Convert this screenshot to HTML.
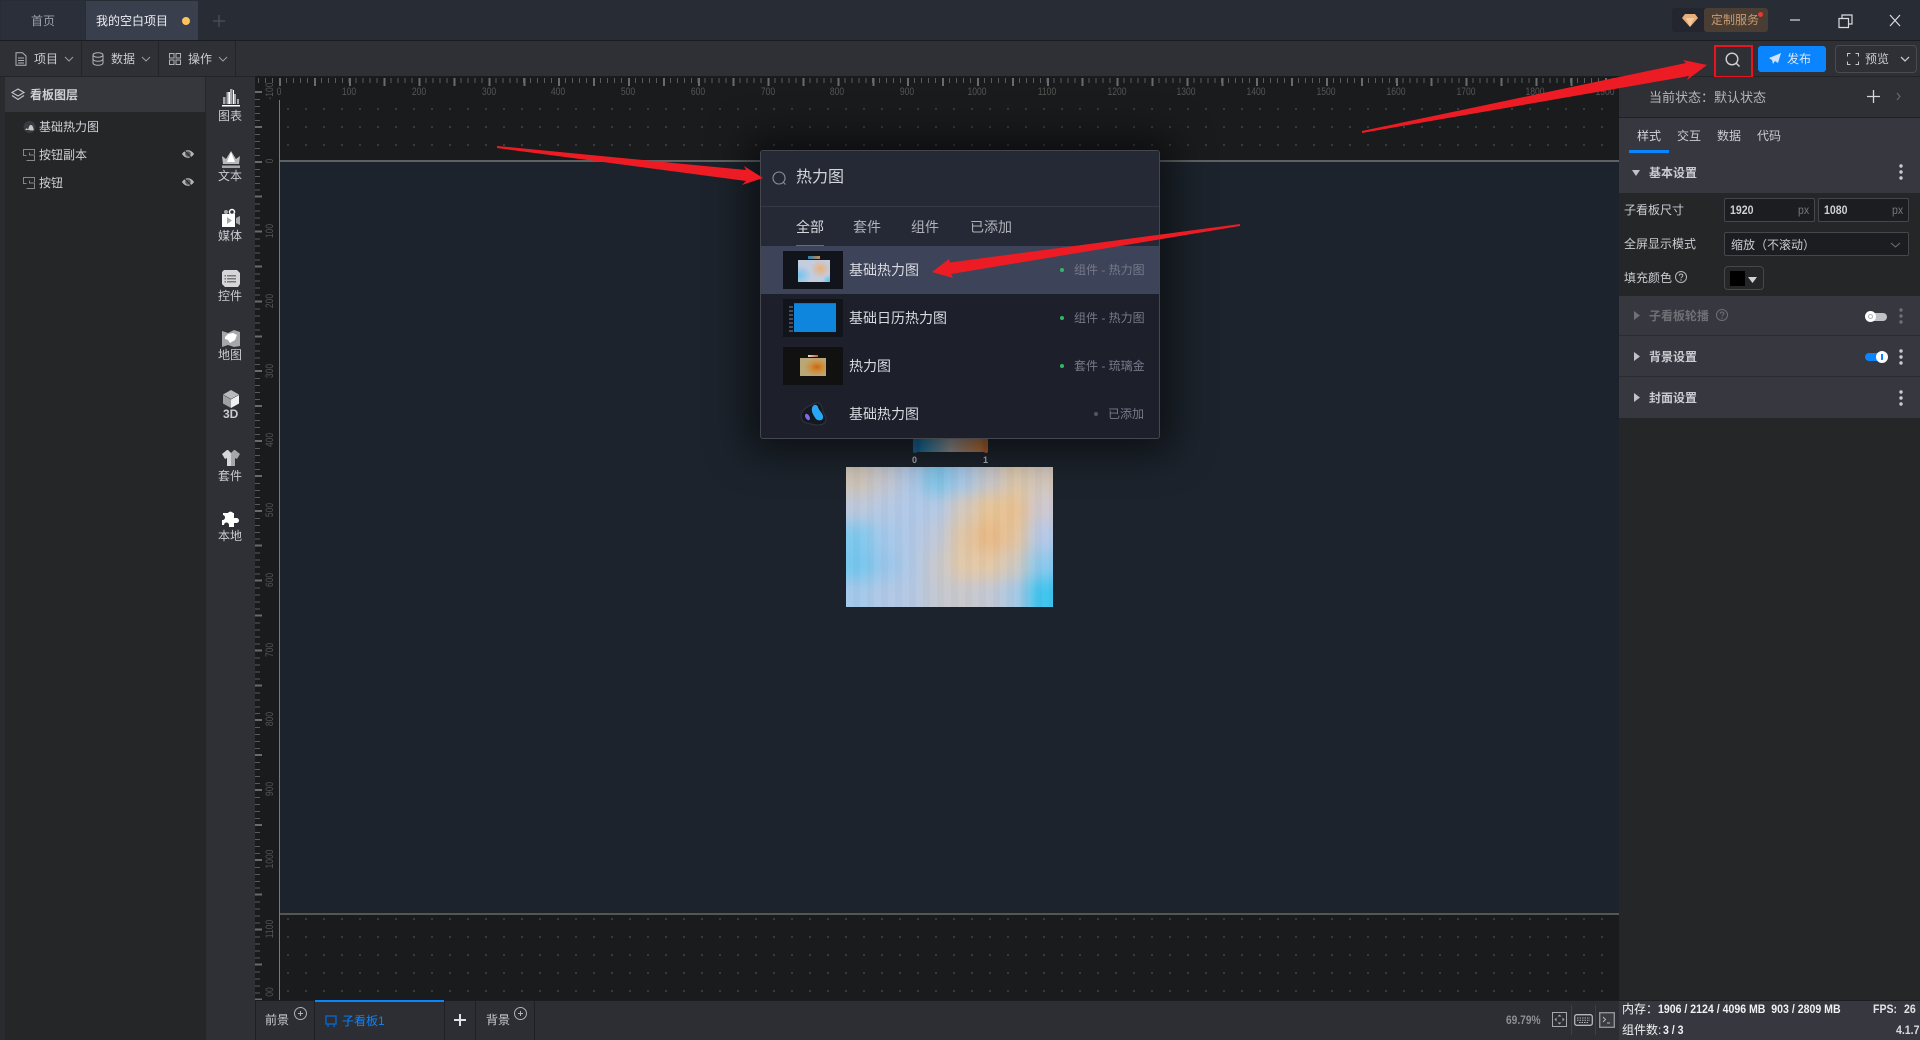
<!DOCTYPE html>
<html lang="zh"><head><meta charset="utf-8"><title>热力图</title>
<style>
html,body{margin:0;padding:0;width:1920px;height:1040px;overflow:hidden;background:#252628}
body{position:relative;font-family:"Liberation Sans","Noto Sans CJK SC",sans-serif;font-size:12px;color:#c9ccd1}
.a{position:absolute}
.t{position:absolute;white-space:nowrap;line-height:20px;height:20px}
.b{font-weight:700}
.n{font-family:"Liberation Sans",sans-serif;transform:scaleX(.88);transform-origin:0 50%}
svg{position:absolute;overflow:visible}
.rl{position:absolute;top:85px;width:40px;text-align:center;font:11px/14px "Liberation Sans",sans-serif;color:#555;transform:scaleX(.78)}
.vl{position:absolute;left:250px;width:40px;text-align:center;font:11px/14px "Liberation Sans",sans-serif;color:#555;transform:rotate(-90deg) scaleX(.78)}
.inp{position:absolute;background:#1c1d20;border:1px solid #46474c;border-radius:2px;box-sizing:border-box}
</style></head><body>

<!-- title bar -->
<div class="a" style="left:0;top:0;width:1920px;height:41px;background:#282c35;border-bottom:1px solid #1b1c20;box-sizing:border-box"></div>
<div class="a" style="left:1px;top:1px;width:84px;height:39px;background:#2b2f39"></div>
<div class="a" style="left:86px;top:1px;width:112px;height:39px;background:#3a3f4d"></div>
<div class="t" style="left:31px;top:11px;color:#9aa0a8">首页</div>
<div class="t" style="left:96px;top:11px;color:#eceef2">我的空白项目</div>
<div class="a" style="left:182px;top:17px;width:8px;height:8px;border-radius:50%;background:#ffc35c"></div>
<svg style="left:212px;top:14px" width="14" height="14"><path d="M7 1v12M1 7h12" stroke="#474b55" stroke-width="1.5"/></svg>
<div class="a" style="left:1672px;top:8px;width:96px;height:24px;background:#23262e;border-radius:3px"></div>
<div class="a" style="left:1704px;top:8px;width:64px;height:24px;background:#4a3d33;border-radius:3px"></div>
<svg style="left:1682px;top:14px" width="16" height="13"><path d="M3 0h10l3 4-8 9-8-9z" fill="#e8ad78"/><path d="M4 4h8l-4 9z" fill="#f5c99b"/></svg>
<div class="t" style="left:1711px;top:10px;color:#c99b72">定制服务</div>
<div class="a" style="left:1758px;top:12px;width:5px;height:5px;border-radius:50%;background:#e53935"></div>
<svg style="left:1790px;top:14px" width="120" height="14"><path d="M0 6h10" stroke="#d9dbdf" stroke-width="1.2"/><path d="M49 4.5h9.5v9h-9.5zM52 4.500V1h10v9h-3.500" fill="none" stroke="#d9dbdf" stroke-width="1.200"/><path d="M100 1l10 11M110 1l-10 11" stroke="#d9dbdf" stroke-width="1.200"/></svg>

<!-- toolbar -->
<div class="a" style="left:0;top:41px;width:1920px;height:36px;background:#2f3035;border-bottom:1px solid #232427;box-sizing:border-box"></div>
<div class="a" style="left:81px;top:41px;width:1px;height:35px;background:#232427"></div>
<div class="a" style="left:158px;top:41px;width:1px;height:35px;background:#232427"></div>
<div class="a" style="left:235px;top:41px;width:1px;height:35px;background:#232427"></div>
<svg style="left:15px;top:52px" width="12" height="14"><path d="M1 .7h6.500L11 4v9.300H1zM3 6h6M3 8.500h6M3 11h6" fill="none" stroke="#b0b2b7"/></svg>
<div class="t" style="left:34px;top:49px">项目</div>
<svg style="left:64px;top:56px" width="10" height="6"><path d="M1 1l4 4 4-4" fill="none" stroke="#9a9ca1"/></svg>
<svg style="left:92px;top:52px" width="12" height="14"><ellipse cx="6" cy="3" rx="5" ry="2.300" fill="none" stroke="#b0b2b7"/><path d="M1 3v8c0 3 10 3 10 0V3M1 7c0 3 10 3 10 0" fill="none" stroke="#b0b2b7"/></svg>
<div class="t" style="left:111px;top:49px">数据</div>
<svg style="left:141px;top:56px" width="10" height="6"><path d="M1 1l4 4 4-4" fill="none" stroke="#9a9ca1"/></svg>
<svg style="left:169px;top:53px" width="12" height="12"><path d="M.5.5h4.500v4.500H.5zM7 .5h4.500v4.500H7zM.5 7h4.500v4.500H.5zM7 7h4.500v4.500H7z" fill="none" stroke="#b0b2b7"/></svg>
<div class="t" style="left:188px;top:49px">操作</div>
<svg style="left:218px;top:56px" width="10" height="6"><path d="M1 1l4 4 4-4" fill="none" stroke="#9a9ca1"/></svg>

<svg style="left:1725px;top:52px" width="16" height="16"><circle cx="7" cy="7" r="5.800" fill="none" stroke="#d0d2d6" stroke-width="1.400"/><path d="M11 11l3.500 3.500" stroke="#d0d2d6" stroke-width="1.400"/></svg>
<div class="a" style="left:1714px;top:45px;width:39px;height:33px;border:2px solid #e8141e;box-sizing:border-box"></div>
<div class="a" style="left:1758px;top:46px;width:68px;height:26px;background:#0a84ff;border-radius:3px"></div>
<svg style="left:1769px;top:53px" width="12" height="12"><path d="M12 0L0 5l3 2 1 4 2-3 3 2z" fill="#cfe4fb"/></svg>
<div class="t" style="left:1787px;top:49px;color:#d6e8fb">发布</div>
<div class="a" style="left:1835px;top:45px;width:82px;height:28px;border:1px solid #4a4b50;border-radius:4px;box-sizing:border-box"></div>
<svg style="left:1847px;top:53px" width="12" height="12"><path d="M.5 3.500v-3h3M8.500.5h3v3M11.500 8.500v3h-3M3.500 11.500h-3v-3" fill="none" stroke="#c4c6ca"/></svg>
<div class="t" style="left:1865px;top:49px">预览</div>
<svg style="left:1900px;top:56px" width="10" height="7"><path d="M1 1l4 4 4-4" fill="none" stroke="#c4c6ca" stroke-width="1.300"/></svg>

<!-- left rail & layers -->
<div class="a" style="left:0;top:77px;width:5px;height:963px;background:#2a2b2f"></div>
<div class="a" style="left:5px;top:77px;width:200px;height:963px;background:#252628"></div>
<div class="a" style="left:5px;top:77px;width:200px;height:35px;background:#36373d"></div>
<svg style="left:11px;top:88px" width="14" height="13"><path d="M7 1l6 3.500-6 3.500-6-3.500zM1 7.500l6 4 6-4" fill="none" stroke="#c4c6ca" stroke-width="1.100"/></svg>
<div class="t b" style="left:30px;top:85px;color:#cfd1d5">看板图层</div>
<svg style="left:23px;top:121px" width="13" height="12"><circle cx="6.500" cy="6" r="6" fill="#3a3b40"/><path d="M5 9c1-3 1-5 3-5s2 3 3 5c-2 1-4 0-6 0zM2 9l2-2 1 2z" fill="#c6c8cc"/></svg>
<div class="t" style="left:39px;top:117px;color:#cfd3d8">基础热力图</div>
<svg style="left:23px;top:149px" width="12" height="12"><path d="M11.500 5V.5H.5v6h3M3.500 11.500h8V6h-5V3.500" fill="none" stroke="#85878c"/></svg>
<div class="t" style="left:39px;top:145px;color:#cfd3d8">按钮副本</div>
<svg style="left:23px;top:177px" width="12" height="12"><path d="M11.500 5V.5H.5v6h3M3.500 11.500h8V6h-5V3.500" fill="none" stroke="#85878c"/></svg>
<div class="t" style="left:39px;top:173px;color:#cfd3d8">按钮</div>
<svg style="left:182px;top:149px" width="12" height="11"><path d="M0 5C3 0 9 0 12 5 9 10 3 10 0 5z" fill="#b4b6ba"/><circle cx="6" cy="5" r="2.800" fill="#55565b"/><path d="M1 0l10 10.500" stroke="#252628"/></svg>
<svg style="left:182px;top:177px" width="12" height="11"><path d="M0 5C3 0 9 0 12 5 9 10 3 10 0 5z" fill="#b4b6ba"/><circle cx="6" cy="5" r="2.800" fill="#55565b"/><path d="M1 0l10 10.500" stroke="#252628"/></svg>

<!-- icon bar -->
<div class="a" style="left:206px;top:77px;width:49px;height:963px;background:#2f3035"></div>
<svg style="left:222px;top:89px" width="18" height="18"><path d="M1 15V8h2.500v7zM4.500 15V3h2.500v12zM8 15V0h2.500v15zM11.500 15V5H14v10zM15 15v-5h2v5z" fill="#a6a7aa"/><path d="M6.500 15V3h1.500v12zM11 15V1h1v14z" fill="#fff"/><path d="M0 16h18v1.500H0z" fill="#fff"/></svg>
<div class="t" style="left:218px;top:106px">图表</div>
<svg style="left:222px;top:151px" width="18" height="17"><path d="M0 5l4 3 5-8 5 8 4-3-1 8H1z" fill="#b8b9bc"/><path d="M5 11l4-10 4 10z" fill="#fff"/><path d="M0 14.500h18V17H0z" fill="#a6a7aa"/></svg>
<div class="t" style="left:218px;top:166px">文本</div>
<svg style="left:222px;top:209px" width="18" height="18"><path d="M0 5h13v13H0z" fill="#fff"/><path d="M14 9l4-2v9l-4-2z" fill="#a6a7aa"/><circle cx="4" cy="3" r="2" fill="#a6a7aa"/><circle cx="10" cy="3" r="2.500" fill="none" stroke="#fff" stroke-width="1.500"/><path d="M5 8l5 3.500L5 15z" fill="#a6a7aa"/></svg>
<div class="t" style="left:218px;top:226px">媒体</div>
<svg style="left:222px;top:270px" width="18" height="17"><path d="M2 0h13l3 3v11l-2 3H3l-3-3V2z" fill="#d6d6d8"/><path d="M5 5h9v1.500H5zM5 8h9v1.500H5zM5 11h9v1.500H5z" fill="#77787c"/><path d="M2.500 5h1.500v1.500H2.500zM2.500 8h1.500v1.500H2.500zM2.500 11h1.500v1.500H2.500z" fill="#77787c"/></svg>
<div class="t" style="left:218px;top:286px">控件</div>
<svg style="left:222px;top:329px" width="18" height="18"><path d="M0 2l6 2 6-3 6 2v14l-6 1-6-2-6 2z" fill="#a6a7aa"/><path d="M3 8l3-3 5-1 4 2-2 5-5 3-2-3-3-1z" fill="#fff"/></svg>
<div class="t" style="left:218px;top:345px">地图</div>
<svg style="left:223px;top:390px" width="16" height="18"><path d="M8 0l8 4.500-8 4.500L0 4.500z" fill="#b8b9bc"/><path d="M0 5l8 4.500V18l-8-4.500z" fill="#a0a1a4"/><path d="M16 5l-8 4.500V18l8-4.500z" fill="#f0f0f1"/></svg>
<div class="t b" style="left:223px;top:404px">3D</div>
<svg style="left:222px;top:450px" width="18" height="17"><path d="M5 0L0 4l3 5 2-1v8h4V0z" fill="#d6d6d8"/><path d="M13 0l5 4-3 5-2-1v8H9V0z" fill="#a6a7aa"/><path d="M6 0h6L9 3z" fill="#2f3035"/></svg>
<div class="t" style="left:218px;top:466px">套件</div>
<svg style="left:222px;top:510px" width="18" height="18"><path d="M6 3a3 3 0 0 1 5 0h1v5h2.500a2.500 2.500 0 0 1 0 5H12v4H7v-2a2.500 2.500 0 0 0-5 0H0v-5a2.500 2.500 0 0 0 1-5V3z" fill="#fff"/></svg>
<div class="t" style="left:218px;top:526px">本地</div>

<!-- canvas & rulers -->
<div class="a" style="left:255px;top:76px;width:1364px;height:924px;background:#1a1b1d"></div>
<div class="a" style="left:280px;top:100px;width:1339px;height:900px;background-image:radial-gradient(circle at 1px 1px,#3b3c3f 1px,transparent 1.200px);background-size:18px 18px;background-position:7px 8px"></div>
<!-- top ticks -->
<div class="a" style="left:258px;top:78px;width:1361px;height:5px;background:repeating-linear-gradient(90deg,#5a5b5e 0 1px,transparent 1px 6.980px);background-position:0 0"></div>
<div class="a" style="left:279px;top:78px;width:1340px;height:8px;background:repeating-linear-gradient(90deg,#6a6b6e 0 2px,transparent 2px 34.900px)"></div>
<div class="rl" style="left:259px">0</div><div class="rl" style="left:329px">100</div><div class="rl" style="left:399px">200</div><div class="rl" style="left:469px">300</div><div class="rl" style="left:538px">400</div><div class="rl" style="left:608px">500</div><div class="rl" style="left:678px">600</div><div class="rl" style="left:748px">700</div><div class="rl" style="left:817px">800</div><div class="rl" style="left:887px">900</div><div class="rl" style="left:957px">1000</div><div class="rl" style="left:1027px">1100</div><div class="rl" style="left:1097px">1200</div><div class="rl" style="left:1166px">1300</div><div class="rl" style="left:1236px">1400</div><div class="rl" style="left:1306px">1500</div><div class="rl" style="left:1376px">1600</div><div class="rl" style="left:1446px">1700</div><div class="rl" style="left:1515px">1800</div><div class="rl" style="left:1585px">1900</div>
<!-- left ticks -->
<div class="a" style="left:255px;top:99px;width:5px;height:901px;background:repeating-linear-gradient(180deg,#5a5b5e 0 1px,transparent 1px 6.980px)"></div>
<div class="a" style="left:255px;top:91px;width:7px;height:909px;background:repeating-linear-gradient(180deg,#6a6b6e 0 2px,transparent 2px 34.900px)"></div>
<div class="vl" style="top:154px">0</div><div class="vl" style="top:224px">100</div><div class="vl" style="top:294px">200</div><div class="vl" style="top:364px">300</div><div class="vl" style="top:433px">400</div><div class="vl" style="top:503px">500</div><div class="vl" style="top:573px">600</div><div class="vl" style="top:643px">700</div><div class="vl" style="top:712px">800</div><div class="vl" style="top:782px">900</div><div class="vl" style="top:852px">1000</div><div class="vl" style="top:922px">1100</div><div class="vl" style="top:985px">00</div><div class="vl" style="top:84px">-100</div>
<div class="a" style="left:279px;top:100px;width:1px;height:900px;background:#77787a"></div>
<!-- board -->
<div class="a" style="left:280px;top:161px;width:1339px;height:753px;background:#1c232c"></div>
<div class="a" style="left:280px;top:160px;width:1339px;height:2px;background:#5f6163"></div>
<div class="a" style="left:280px;top:913px;width:1339px;height:2px;background:#55584f"></div>

<!-- heat legend + map -->
<div class="a" style="left:913px;top:438px;width:75px;height:14px;background:linear-gradient(90deg,#0e4a70,#1c6f99 12%,#8a8a8c 50%,#a86b3a 90%,#8f5330)"></div>
<div class="a" style="left:913px;top:438px;width:4px;height:15px;background:#1b5f92;border-radius:0 0 2px 2px"></div>
<div class="a" style="left:984px;top:438px;width:4px;height:15px;background:#a35b2f;border-radius:0 0 2px 2px"></div>
<div class="t b" style="left:912px;top:450px;font-size:9px;color:#b0b2b5">0</div>
<div class="t b" style="left:983px;top:450px;font-size:9px;color:#b0b2b5">1</div>
<div class="a" style="left:845.500px;top:467px;width:207px;height:140px;overflow:hidden;background:#b9cae2">
<svg style="left:0;top:0;overflow:visible;filter:blur(8px)" width="207" height="140">
<rect x="-30" y="-30" width="56" height="58" fill="#d0c5b8"/><rect x="26" y="-30" width="26" height="58" fill="#c6c8d0"/><rect x="52" y="-30" width="26" height="58" fill="#b0c8e6"/><rect x="78" y="-30" width="26" height="58" fill="#7ec6ea"/><rect x="104" y="-30" width="26" height="58" fill="#a8c8e8"/><rect x="130" y="-30" width="26" height="58" fill="#c8c8cc"/><rect x="156" y="-30" width="26" height="58" fill="#dcc8ac"/><rect x="182" y="-30" width="56" height="58" fill="#d4c8bc"/>
<rect x="-30" y="28" width="56" height="28" fill="#bcc8dc"/><rect x="26" y="28" width="26" height="28" fill="#b4c8e4"/><rect x="52" y="28" width="26" height="28" fill="#b0c8e8"/><rect x="78" y="28" width="26" height="28" fill="#b4c8e4"/><rect x="104" y="28" width="26" height="28" fill="#d4c8bc"/><rect x="130" y="28" width="26" height="28" fill="#e6c494"/><rect x="156" y="28" width="26" height="28" fill="#e8c090"/><rect x="182" y="28" width="56" height="28" fill="#ccc8d0"/>
<rect x="-30" y="56" width="56" height="28" fill="#7ec8ee"/><rect x="26" y="56" width="26" height="28" fill="#a4c8ea"/><rect x="52" y="56" width="26" height="28" fill="#b0c8e6"/><rect x="78" y="56" width="26" height="28" fill="#c0c8d8"/><rect x="104" y="56" width="26" height="28" fill="#e0c6a4"/><rect x="130" y="56" width="26" height="28" fill="#e8b884"/><rect x="156" y="56" width="26" height="28" fill="#e4c49c"/><rect x="182" y="56" width="56" height="28" fill="#b4c8e8"/>
<rect x="-30" y="84" width="56" height="28" fill="#74c6ee"/><rect x="26" y="84" width="26" height="28" fill="#98c6ea"/><rect x="52" y="84" width="26" height="28" fill="#b0c8e6"/><rect x="78" y="84" width="26" height="28" fill="#c8c8cc"/><rect x="104" y="84" width="26" height="28" fill="#e2c8a8"/><rect x="130" y="84" width="26" height="28" fill="#e4c8a4"/><rect x="156" y="84" width="26" height="28" fill="#d0c8c0"/><rect x="182" y="84" width="56" height="28" fill="#88c8ee"/>
<rect x="-30" y="112" width="56" height="58" fill="#a4c8ea"/><rect x="26" y="112" width="26" height="58" fill="#b0c8e6"/><rect x="52" y="112" width="26" height="58" fill="#b4c8e4"/><rect x="78" y="112" width="26" height="58" fill="#c4c8d0"/><rect x="104" y="112" width="26" height="58" fill="#c8c8cc"/><rect x="130" y="112" width="26" height="58" fill="#c4c8d4"/><rect x="156" y="112" width="26" height="58" fill="#a8c8e4"/><rect x="182" y="112" width="56" height="58" fill="#3cc4ee"/>
</svg>
<div class="a" style="left:0;top:0;width:207px;height:140px;background:repeating-linear-gradient(90deg,rgba(255,255,255,.025) 0 7px,rgba(0,0,0,.015) 7px 14px)"></div>
</div>

<!-- bottom bar -->
<div class="a" style="left:255px;top:1000px;width:1364px;height:40px;background:#2c2e33;border-top:1px solid #1c1d20;box-sizing:border-box"></div>
<div class="a" style="left:255px;top:1001px;width:1px;height:39px;background:#1f2023"></div>
<div class="a" style="left:314px;top:1001px;width:1px;height:39px;background:#1f2023"></div>
<div class="a" style="left:315px;top:1000px;width:129px;height:1.500px;background:#0a84ff"></div>
<div class="a" style="left:444px;top:1001px;width:1px;height:39px;background:#1f2023"></div>
<div class="a" style="left:475px;top:1001px;width:1px;height:39px;background:#1f2023"></div>
<div class="a" style="left:534px;top:1001px;width:1px;height:39px;background:#1f2023"></div>
<div class="t" style="left:265px;top:1010px">前景</div>
<svg style="left:294px;top:1007px" width="13" height="13"><circle cx="6.500" cy="6.500" r="6" fill="none" stroke="#b0b2b6"/><path d="M4 6.500h5M6.500 4v5" stroke="#b0b2b6"/></svg>
<svg style="left:325px;top:1015px" width="12" height="13"><path d="M1 1h10v8H1zM3 9v3M9 9v3" fill="none" stroke="#0a62c0" stroke-width="1.500"/></svg>
<div class="t" style="left:342px;top:1011px;color:#0a84ff">子看板1</div>
<svg style="left:454px;top:1014px" width="12" height="12"><path d="M6 0v12M0 6h12" stroke="#e0e2e5" stroke-width="2"/></svg>
<div class="t" style="left:486px;top:1010px">背景</div>
<svg style="left:514px;top:1007px" width="13" height="13"><circle cx="6.500" cy="6.500" r="6" fill="none" stroke="#b0b2b6"/><path d="M4 6.500h5M6.500 4v5" stroke="#b0b2b6"/></svg>
<div class="t b n" style="left:1506px;top:1010px;color:#8d8f93;transform:scaleX(.85)">69.79%</div>
<svg style="left:1552px;top:1012px" width="15" height="15"><rect x=".5" y=".5" width="14" height="14" fill="none" stroke="#a5a7ab"/><path d="M7.500 2.500l-2 2h4zM7.500 12.500l-2-2h4zM2.500 7.500l2-2v4zM12.500 7.500l-2-2v4z" fill="#a5a7ab"/></svg>
<div class="a" style="left:1571px;top:1005px;width:1px;height:30px;background:#3d3f44"></div>
<svg style="left:1574px;top:1014px" width="19" height="12"><rect x=".7" y=".7" width="17.600" height="10.600" rx="2" fill="none" stroke="#b5b7bb" stroke-width="1.300"/><path d="M3 4h13M3 6.200h13M5 8.500h9" stroke="#b5b7bb" stroke-dasharray="1.500 1"/></svg>
<div class="a" style="left:1595px;top:1005px;width:1px;height:30px;background:#3d3f44"></div>
<svg style="left:1599px;top:1012px" width="16" height="16"><rect x=".7" y=".7" width="14.600" height="14.600" fill="#3a3c41" stroke="#909296" stroke-width="1.400"/><path d="M4 5l2.500 2.500L4 10M8 11h3" fill="none" stroke="#b5b7bb"/></svg>

<!-- right panel -->
<div class="a" style="left:1619px;top:77px;width:301px;height:923px;background:#252628"></div>
<div class="a" style="left:1619px;top:77px;width:301px;height:40px;background:#2f3035"></div>
<div class="a" style="left:1619px;top:117px;width:301px;height:1px;background:#202124"></div>
<div class="a" style="left:1619px;top:118px;width:301px;height:75px;background:#37383f"></div>
<div class="t" style="left:1649px;top:88px;font-size:13px;color:#b4b6bb">当前状态：默认状态</div>
<svg style="left:1867px;top:90px" width="13" height="13"><path d="M6.500 0v13M0 6.500h13" stroke="#d5d7da" stroke-width="1.300"/></svg>
<svg style="left:1896px;top:92px" width="5" height="9"><path d="M1 1l3 3.500L1 8" fill="none" stroke="#6d6f74"/></svg>
<div class="t" style="left:1637px;top:126px;color:#d3d5d9">样式</div>
<div class="t" style="left:1677px;top:126px">交互</div>
<div class="t" style="left:1717px;top:126px">数据</div>
<div class="t" style="left:1757px;top:126px">代码</div>
<div class="a" style="left:1629px;top:150px;width:40px;height:2.500px;background:#0a84ff"></div>
<svg style="left:1632px;top:170px" width="8" height="6"><path d="M0 0h8L4 6z" fill="#c0c2c6"/></svg>
<div class="t b" style="left:1649px;top:163px;color:#c9ccd1">基本设置</div>
<svg style="left:1899px;top:164px" width="4" height="16"><circle cx="2" cy="2" r="1.700" fill="#c9ccd1"/><circle cx="2" cy="8" r="1.700" fill="#c9ccd1"/><circle cx="2" cy="14" r="1.700" fill="#c9ccd1"/></svg>

<div class="t" style="left:1624px;top:200px">子看板尺寸</div>
<div class="inp" style="left:1724px;top:198px;width:91px;height:24px"></div>
<div class="inp" style="left:1818px;top:198px;width:91px;height:24px"></div>
<div class="t b n" style="left:1730px;top:200px;color:#cfd1d5">1920</div>
<div class="t n" style="left:1798px;top:200px;color:#77797d">px</div>
<div class="t b n" style="left:1824px;top:200px;color:#cfd1d5">1080</div>
<div class="t n" style="left:1892px;top:200px;color:#77797d">px</div>
<div class="t" style="left:1624px;top:234px">全屏显示模式</div>
<div class="inp" style="left:1724px;top:232px;width:185px;height:24px"></div>
<div class="t" style="left:1731px;top:235px">缩放（不滚动）</div>
<svg style="left:1890px;top:242px" width="11" height="6"><path d="M1 1l4.500 4L10 1" fill="none" stroke="#6f7176"/></svg>
<div class="t" style="left:1624px;top:268px">填充颜色</div>
<svg style="left:1675px;top:271px" width="12" height="12"><circle cx="6" cy="6" r="5.500" fill="none" stroke="#b5b7bb"/><path d="M4.300 4.700c0-2.300 3.500-2.300 3.500 0 0 1.300-1.800 1.300-1.800 2.600" fill="none" stroke="#b5b7bb"/><circle cx="6" cy="9" r=".7" fill="#b5b7bb"/></svg>
<div class="a" style="left:1724px;top:266px;width:40px;height:24px;border:1px solid #46474c;border-radius:4px;box-sizing:border-box;background:#252628"></div>
<div class="a" style="left:1730px;top:271px;width:15px;height:15px;background:#000"></div>
<svg style="left:1748px;top:277px" width="9" height="6"><path d="M0 0h9L4.500 6z" fill="#d0d2d5"/></svg>

<div class="a" style="left:1619px;top:296px;width:301px;height:40px;background:#37383f;border-bottom:1px solid #2b2c30;box-sizing:border-box"></div>
<div class="a" style="left:1619px;top:336px;width:301px;height:41px;background:#37383f;border-bottom:1px solid #2b2c30;box-sizing:border-box"></div>
<div class="a" style="left:1619px;top:377px;width:301px;height:41px;background:#37383f"></div>
<svg style="left:1634px;top:311px" width="6" height="9"><path d="M0 0l6 4.500L0 9z" fill="#6f7175"/></svg>
<div class="t b" style="left:1649px;top:306px;color:#6e7075">子看板轮播</div>
<svg style="left:1716px;top:309px" width="12" height="12"><circle cx="6" cy="6" r="5.500" fill="none" stroke="#6e7075"/><path d="M4.300 4.700c0-2.300 3.500-2.300 3.500 0 0 1.300-1.800 1.300-1.800 2.600" fill="none" stroke="#6e7075"/><circle cx="6" cy="9" r=".7" fill="#6e7075"/></svg>
<div class="a" style="left:1866px;top:313px;width:21px;height:8px;border-radius:4px;background:#bfc1c6"></div>
<div class="a" style="left:1865px;top:311px;width:11px;height:11px;border-radius:50%;background:#fff"></div>
<div class="a" style="left:1868px;top:314px;width:5px;height:5px;border-radius:50%;border:1px solid #b0b2b6;box-sizing:border-box"></div>
<svg style="left:1899px;top:308px" width="4" height="16"><circle cx="2" cy="2" r="1.700" fill="#6e7075"/><circle cx="2" cy="8" r="1.700" fill="#6e7075"/><circle cx="2" cy="14" r="1.700" fill="#6e7075"/></svg>
<svg style="left:1634px;top:352px" width="6" height="9"><path d="M0 0l6 4.500L0 9z" fill="#c0c2c6"/></svg>
<div class="t b" style="left:1649px;top:347px;color:#c9ccd1">背景设置</div>
<div class="a" style="left:1865px;top:353px;width:21px;height:8px;border-radius:4px;background:#0a84ff"></div>
<div class="a" style="left:1876px;top:351px;width:12px;height:12px;border-radius:50%;background:#fff"></div>
<div class="a" style="left:1881px;top:354px;width:2px;height:6px;background:#0a84ff"></div>
<svg style="left:1899px;top:349px" width="4" height="16"><circle cx="2" cy="2" r="1.700" fill="#c9ccd1"/><circle cx="2" cy="8" r="1.700" fill="#c9ccd1"/><circle cx="2" cy="14" r="1.700" fill="#c9ccd1"/></svg>
<svg style="left:1634px;top:393px" width="6" height="9"><path d="M0 0l6 4.500L0 9z" fill="#c0c2c6"/></svg>
<div class="t b" style="left:1649px;top:388px;color:#c9ccd1">封面设置</div>
<svg style="left:1899px;top:390px" width="4" height="16"><circle cx="2" cy="2" r="1.700" fill="#c9ccd1"/><circle cx="2" cy="8" r="1.700" fill="#c9ccd1"/><circle cx="2" cy="14" r="1.700" fill="#c9ccd1"/></svg>

<!-- status -->
<div class="a" style="left:1619px;top:1000px;width:301px;height:40px;background:#37383f;border-top:1px solid #1c1d20;box-sizing:border-box"></div>
<div class="t" style="left:1622px;top:999px;color:#f0f1f3">内存：</div>
<div class="t b n" style="left:1658px;top:999px;color:#f0f1f3;white-space:pre">1906 / 2124 / 4096 MB  903 / 2809 MB</div>
<div class="t b n" style="left:1873px;top:999px;color:#e0e2e5">FPS:</div>
<div class="t b n" style="left:1904px;top:999px;color:#e0e2e5">26</div>
<div class="t" style="left:1622px;top:1020px;color:#f0f1f3">组件数:</div>
<div class="t b n" style="left:1663px;top:1020px;color:#f0f1f3">3 / 3</div>
<div class="t b n" style="left:1896px;top:1020px;color:#d8dade">4.1.7</div>

<!-- search modal -->
<div class="a" style="left:760px;top:150px;width:400px;height:289px;background:#1d202b;border:1px solid #45474f;border-radius:3px;box-sizing:border-box;box-shadow:0 0 40px 12px rgba(0,0,0,.55)"></div>
<div class="a" style="left:761px;top:151px;width:398px;height:95px;background:#252936;border-radius:3px 3px 0 0"></div>
<div class="a" style="left:761px;top:206px;width:398px;height:1px;background:#353947"></div>
<svg style="left:772px;top:171px" width="15" height="15"><circle cx="7" cy="7" r="6" fill="none" stroke="#8e9097" stroke-width="1.100"/><path d="M11 11l2.500 2.500" stroke="#8e9097" stroke-width="1.100"/></svg>
<div class="t" style="left:796px;top:168px;font-size:16px;color:#d4d6da">热力图</div>
<div class="t" style="left:796px;top:217px;font-size:14px;color:#d4d6da">全部</div>
<div class="t" style="left:853px;top:217px;font-size:14px;color:#b0b2b8">套件</div>
<div class="t" style="left:911px;top:217px;font-size:14px;color:#b0b2b8">组件</div>
<div class="t" style="left:970px;top:217px;font-size:14px;color:#b0b2b8">已添加</div>
<div class="a" style="left:796px;top:245px;width:28px;height:1px;background:#1b7fe0"></div>
<div class="a" style="left:761px;top:246px;width:398px;height:48px;background:#3d4358"></div>

<div class="a" style="left:783px;top:251px;width:60px;height:38px;background:#12141c"></div>
<div class="a" style="left:798px;top:260px;width:32px;height:22px;background:radial-gradient(ellipse 10px 9px at 70% 40%,#e8b27a 0,transparent 100%),radial-gradient(ellipse 12px 10px at 5% 70%,#72c5ee 0,transparent 100%),radial-gradient(ellipse 8px 8px at 100% 100%,#3cc3ee 0,transparent 100%),#c4cce0"></div>
<div class="a" style="left:808px;top:256px;width:12px;height:3px;background:linear-gradient(90deg,#2a7fb0,#c88a50)"></div>

<div class="a" style="left:783px;top:299px;width:60px;height:38px;background:#12141c"></div>
<div class="a" style="left:794px;top:304px;width:42px;height:28px;background:#0f86dd"></div>
<div class="a" style="left:794px;top:303px;width:42px;height:1px;background:#55606a"></div>
<div class="a" style="left:789px;top:306px;width:4px;height:26px;background:repeating-linear-gradient(180deg,#4a4d55 0 2px,transparent 2px 4px)"></div>

<div class="a" style="left:783px;top:347px;width:60px;height:38px;background:#111"></div>
<div class="a" style="left:800px;top:358px;width:26px;height:18px;background:radial-gradient(ellipse 13px 9px at 65% 50%,#c4681a 0,#cf8f3e 50%,#b8a878 100%)"></div>
<div class="a" style="left:808px;top:355px;width:10px;height:2px;background:linear-gradient(90deg,#e0e0e0,#d05a1a)"></div>

<svg style="left:799px;top:402px" width="28" height="24"><path d="M2 13C3 6 12 3 17 1c5-1 6 4 7 9 1 3 3 4 3 7 0 5-5 6-9 6-6 0-7-2-10-2-3 0-6-3-6-8z" fill="#15181f" stroke="#30343f"/><path d="M13 6c1-4 5-4 6-1 1 4 6 7 5 11-1 3-5 3-7 1-2-3-5-7-4-11z" fill="#27a7f5"/><ellipse cx="8.500" cy="15" rx="2" ry="3.500" transform="rotate(-30 8.500 15)" fill="#7d6cf0"/></svg>

<div class="t" style="left:849px;top:260px;font-size:14px;color:#d8dae0">基础热力图</div>
<div class="t" style="left:849px;top:308px;font-size:14px;color:#d8dae0">基础日历热力图</div>
<div class="t" style="left:849px;top:356px;font-size:14px;color:#d8dae0">热力图</div>
<div class="t" style="left:849px;top:404px;font-size:14px;color:#d8dae0">基础热力图</div>
<div class="a" style="left:1060px;top:268px;width:4px;height:4px;border-radius:50%;background:#2fb866"></div>
<div class="a" style="left:1060px;top:316px;width:4px;height:4px;border-radius:50%;background:#2fb866"></div>
<div class="a" style="left:1060px;top:364px;width:4px;height:4px;border-radius:50%;background:#2fb866"></div>
<div class="a" style="left:1094px;top:412px;width:4px;height:4px;border-radius:50%;background:#55575e"></div>
<div class="t" style="left:1074px;top:260px;color:#77798a">组件 - 热力图</div>
<div class="t" style="left:1074px;top:308px;color:#77798a">组件 - 热力图</div>
<div class="t" style="left:1074px;top:356px;color:#77798a">套件 - 琉璃金</div>
<div class="t" style="left:1108px;top:404px;color:#77798a">已添加</div>

<!-- red arrows -->
<svg style="left:0;top:0" width="1920" height="1040">
<polygon points="1362,131 1686,63 1683,60 1707,65 1687,80 1689,76 1362,133" fill="#ed1c24"/>
<polygon points="497,146 746,170 744,166 763,178 742,185 746,181 497,148" fill="#ed1c24"/>
<polygon points="1240,224 950,262.500 949,259 932,272 953,278 951,274 1240,226" fill="#ed1c24"/>
</svg>
</body></html>
